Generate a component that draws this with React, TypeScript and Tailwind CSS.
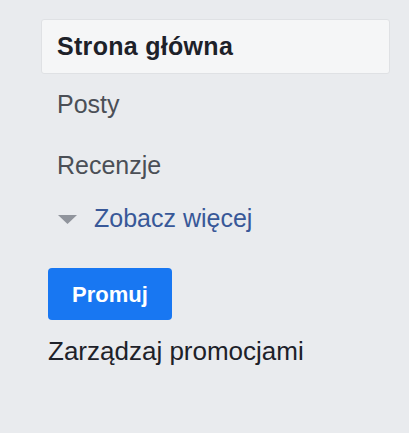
export default function App() {
  return (
    <div
      className="min-h-screen w-full bg-[#e9ebee] pt-[19px]"
      style={{ fontFamily: '"Liberation Sans", Arial, sans-serif' }}
    >
      <div className="ml-[41px] w-[349px]">
        {/* NAV */}
        <div className="flex h-[55px] items-center rounded-[3px] border border-[#dfe1e4] bg-[#f5f6f7] pl-[15px] text-[25px] font-bold tracking-[0.3px] text-[#1d2129]">
          Strona główna
        </div>
        <div className="flex h-[62px] items-center pl-4 text-[25px] text-[#4b4f56]">
          Posty
        </div>
        <div className="flex h-[60px] items-center pl-4 text-[25px] text-[#4b4f56]">
          Recenzje
        </div>
        <div className="flex h-[46px] items-center pl-4 text-[25px] text-[#385898]">
          <svg width="19" height="9" viewBox="0 0 19 9" className="ml-px mr-[17px]">
            <path d="M0 0h19L9.5 9z" fill="#90949c" />
          </svg>
          Zobacz więcej
        </div>
      </div>

      {/* PROMOCJE */}
      <div className="ml-[48px] mt-[26px]">
        <button className="h-[52px] w-[124px] rounded-[4px] bg-[#1877f2] text-[22px] font-bold text-white">
          Promuj
        </button>
        <div className="mt-[17px] text-[26px] leading-[28px] text-[#1d2129]">
          Zarządzaj promocjami
        </div>
      </div>
    </div>
  );
}
